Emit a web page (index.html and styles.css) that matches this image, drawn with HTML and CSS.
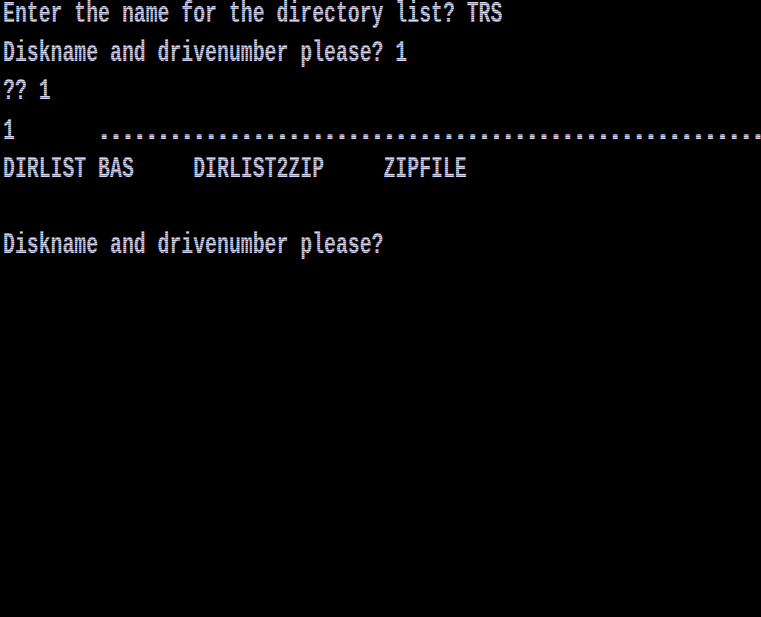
FILE: index.html
```html
<!DOCTYPE html>
<html>
<head>
<meta charset="utf-8">
<link rel="stylesheet" href="styles.css">
</head>
<body>
<div class="screen">
<pre class="text">Enter the name for the directory list? TRS
Diskname and drivenumber please? 1
?? 1
1       <span class="dots">........................................................</span>
DIRLIST BAS     DIRLIST2ZIP     ZIPFILE

Diskname and drivenumber please?</pre>
<div class="scanlines"></div>
</div>
</body>
</html>
```
FILE: styles.css
```css
html, body {
  margin: 0;
  padding: 0;
  background: #000;
  width: 761px;
  height: 617px;
  overflow: hidden;
}
.screen {
  position: relative;
  width: 761px;
  height: 617px;
  overflow: hidden;
  background: #000;
}
.text {
  margin: -4px 0 0 0;
  padding: 0 0 0 3px;
  font-family: "Liberation Mono", "DejaVu Sans Mono", monospace;
  font-size: 19.82px;
  font-weight: bold;
  line-height: 26.23px;
  color: #d6d6f2;
  white-space: pre;
  transform: scaleY(1.47);
  transform-origin: 0 0;
}
.dots {
  text-shadow: 1px 0 0 #d6d6f2, -1px 0 0 #d6d6f2;
}
.scanlines {
  position: absolute;
  inset: 0;
  background: repeating-linear-gradient(to bottom, rgba(0,0,0,0) 0, rgba(0,0,0,0) 1px, rgba(0,0,0,0.35) 1px, rgba(0,0,0,0.35) 2px);
  pointer-events: none;
}
```
